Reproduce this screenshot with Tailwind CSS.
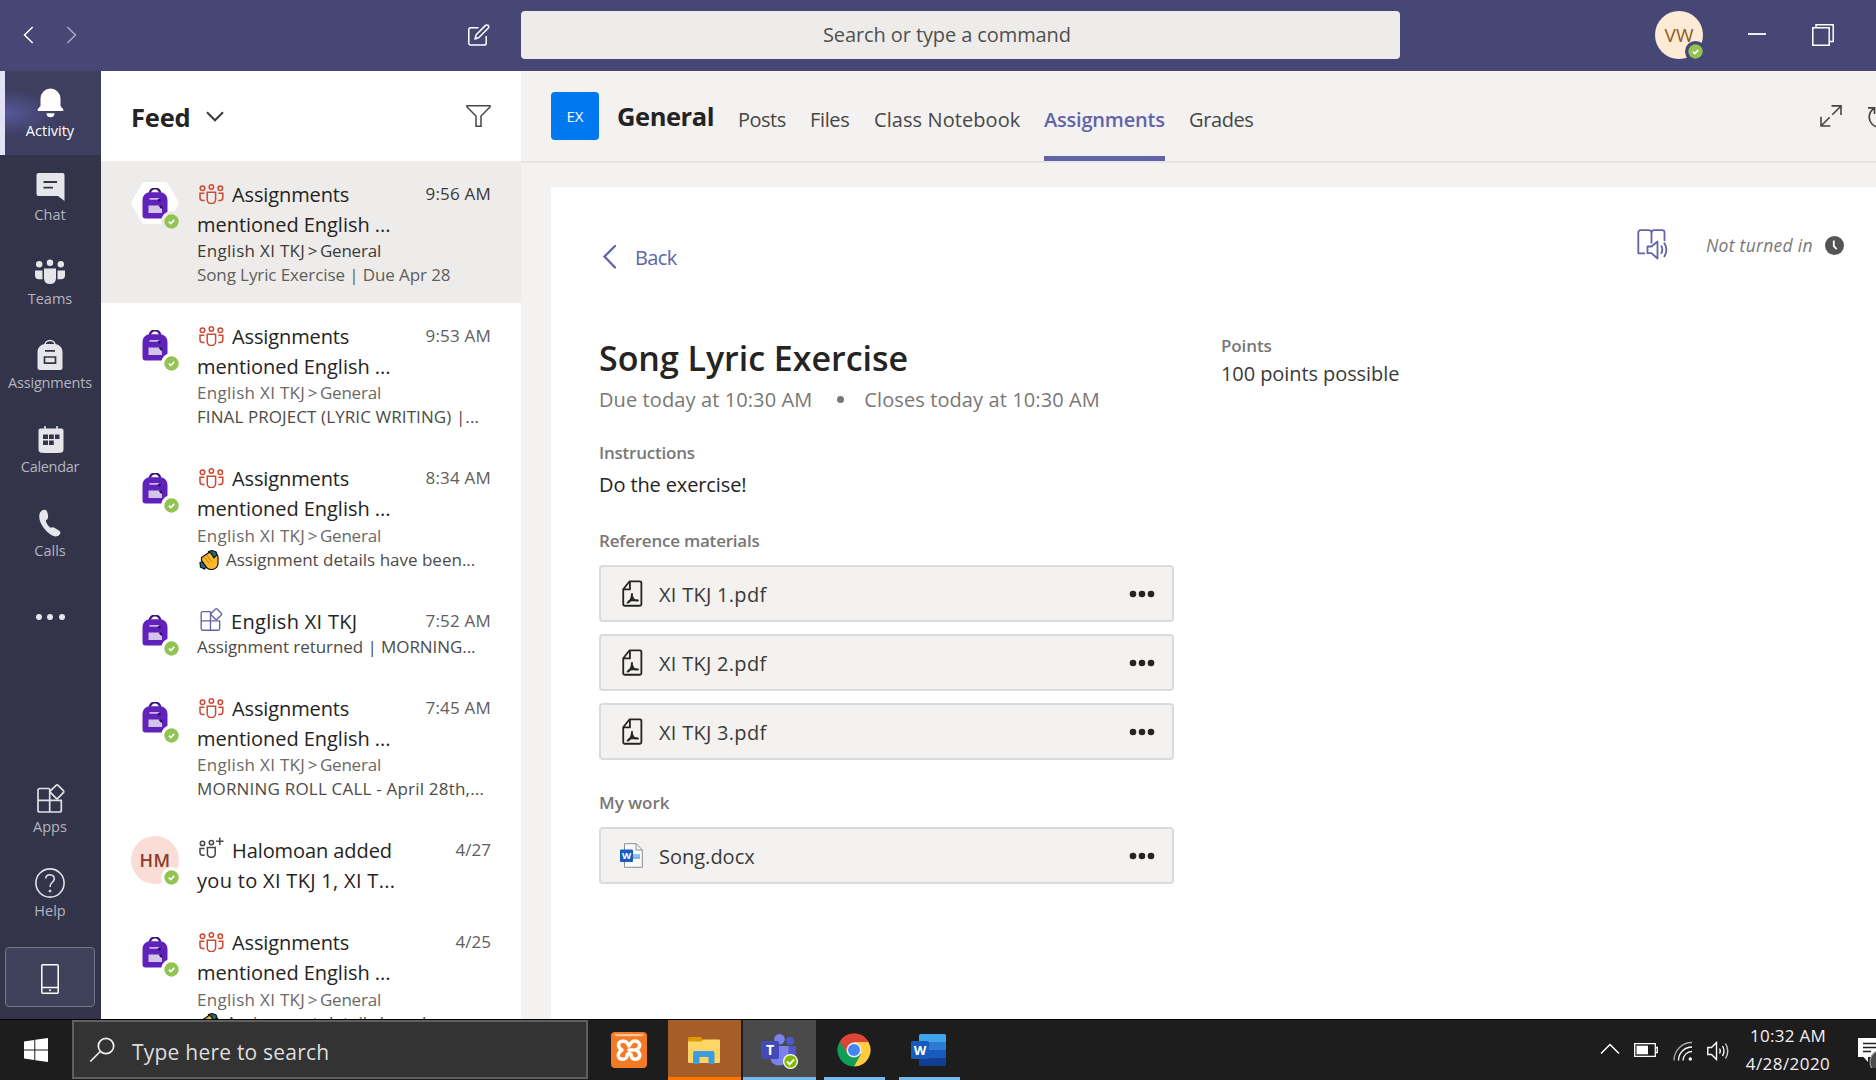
<!DOCTYPE html>
<html lang="en">
<head>
<meta charset="utf-8">
<title>Assignments</title>
<script src="https://cdn.jsdelivr.net/npm/@tailwindcss/browser@4"></script>
</head>
<body class="w-[1876px] h-[1080px] overflow-hidden flex flex-col bg-white font-['Open_Sans',sans-serif] text-[#252423] whitespace-nowrap">

<!-- Shared icons -->
<svg class="hidden">
  <symbol id="team" viewBox="0 0 25 20">
    <g fill="none" stroke="currentColor" stroke-width="1.500">
      <circle cx="3.500" cy="4.200" r="2.300"/><circle cx="12.400" cy="3" r="2.200"/><circle cx="21.300" cy="4.200" r="2.300"/>
      <path d="M8.200 8.200h8.400v7.200a4.200 4.200 0 0 1-8.400 0zM5.400 9.200H1v4.600q0 2.600 2.600 2.600h2M19.400 9.200h4.400v4.600q0 2.600-2.600 2.600h-2"/>
    </g>
  </symbol>
  <symbol id="team-add" viewBox="0 0 25 22">
    <g fill="none" stroke="currentColor" stroke-width="1.500">
      <circle cx="3.500" cy="6.400" r="2.200"/><circle cx="12.400" cy="5.600" r="2.200"/>
      <path d="M8.400 10.600h7.800v6.200a3.500 3.500 0 0 1-3.500 3.500h-.8a3.500 3.500 0 0 1-3.500-3.500zM5.600 11.600H1v4q0 2.600 2.600 2.600h2M20.800.6v7.400M17.100 4.300h7.400"/>
    </g>
  </symbol>
  <symbol id="apps" viewBox="0 0 28 29">
    <path fill="none" stroke="currentColor" stroke-width="1.700" stroke-linejoin="round" d="M12.500 4.500H2.800a1.800 1.800 0 0 0-1.800 1.800V26.200A1.800 1.800 0 0 0 2.800 28H22.500a1.800 1.800 0 0 0 1.800-1.800V16.300H1M12.700 4.500V28M19.100 1.300q1-.8 2 0l5.300 5.400q.8 1 0 2l-5.400 5.400q-1 .8-2 0l-5.400-5.400q-.8-1 0-2z"/>
  </symbol>
  <symbol id="backpack" viewBox="0 0 26 31">
    <path d="M7.500 6a5.500 5.500 0 0 1 11 0" fill="none" stroke="#3b1a80" stroke-width="2.200"/>
    <path d="M.5 12A7.500 7.500 0 0 1 8 4.200h10A7.500 7.500 0 0 1 25.500 12v15.500a3 3 0 0 1-3 3h-19a3 3 0 0 1-3-3z" fill="#6022bb"/>
    <path d="M7.500 10.200h10v1.400h-10z" fill="#e9def8"/><circle cx="17.300" cy="12" r="1.500" fill="#2a0e60"/>
    <path d="M6.500 17.500H18l2 2V25H6.500z" fill="#d3c4ea"/><path d="M16.500 17.500h3.200l1 3.400-2.200-.6z" fill="#2a0e60"/>
  </symbol>
  <symbol id="available" viewBox="0 0 16 16">
    <circle cx="8" cy="8" r="7.700" fill="#92c353"/><path d="M5.200 8.200l2 2L11 6.300" fill="none" stroke="#fff" stroke-width="1.700"/>
  </symbol>
  <symbol id="clap" viewBox="0 0 20 20">
    <path d="M9.500 1.500l3.500-1 4 1.500 1.500 4-2 3-5-3zM1 12.500l3-1 4 5-2.500 2.500L1.500 17z" fill="#1b6f82" stroke="#111" stroke-width="1.200"/>
    <path d="M2.500 7.500L7 4.500l3-2 2 .8 3 4.700L17 5.500q2-.5 2 2v6q-.5 5-5.500 6-4 .4-6-2.200l-5-7z" fill="#fdb92e" stroke="#111" stroke-width="1.200"/>
    <path d="M5 7l5 6M7.500 5l5 6.500" stroke="#c77a10" stroke-width="1"/>
  </symbol>
  <symbol id="pdf" viewBox="0 0 22 28">
    <g fill="none" stroke="#252423" stroke-width="1.900" stroke-linejoin="round">
      <path d="M8 1.200h10.700a1.600 1.600 0 0 1 1.600 1.600v22.400a1.600 1.600 0 0 1-1.600 1.600H2.900a1.600 1.600 0 0 1-1.600-1.600V9.500zM8.300 1.800V9.700H1.800"/>
      <path d="M10.500 14.500q-.3 4.500-1.500 6.200-1.500 2.300-3.200 2.800M10.400 16.500q1 3.500 3 4.600 1.300.5 3.300.2M7 22.300q3.500-1.800 8.500-1.300" stroke-width="2" stroke-linecap="round"/>
    </g>
  </symbol>
  <symbol id="more" viewBox="0 0 26 8"><g fill="#252423"><circle cx="4" cy="4" r="3.300"/><circle cx="13" cy="4" r="3.300"/><circle cx="22" cy="4" r="3.300"/></g></symbol>
</svg>

<!-- Title bar -->
<header class="h-[71px] shrink-0 bg-[#464775] flex items-center text-white pb-px">
  <div class="w-[521px] flex items-center shrink-0">
    <svg class="w-[11px] h-[18px] ml-[23px]" viewBox="0 0 11 18" fill="none" stroke="#fff" stroke-width="1.500"><path d="M9.700 1L1.500 9l8.200 8"/></svg>
    <svg class="w-[11px] h-[18px] ml-[32px]" viewBox="0 0 11 18" fill="none" stroke="#a9a9c4" stroke-width="1.500"><path d="M1.300 1l8.200 8-8.200 8"/></svg>
    <svg class="w-[22px] h-[22px] ml-[391px]" viewBox="0 0 22 22" fill="none" stroke="#fff" stroke-width="1.500" stroke-linejoin="round"><path d="M10.500 3.800H2.600A1.800 1.800 0 0 0 .8 5.600v13.600A1.800 1.800 0 0 0 2.600 21h13.800a1.800 1.800 0 0 0 1.800-1.800V12M7 15l1.200-4.300L17.500 1.400q1.300-1 2.600 0 1.300 1.300 0 2.800L10.900 13.500z"/></svg>
  </div>
  <div class="w-[879px] h-12 rounded bg-[#edecea] text-[#505050] text-[20px] tracking-[-0.100px] pl-[302px] flex items-center">Search or type a command</div>
  <div class="relative w-12 h-12 ml-[255px] rounded-full bg-[#fdebd6] text-[#8f5a1c] text-[19px] flex items-center justify-center">VW
    <div class="absolute left-[30px] top-[30px] w-[21px] h-[21px] rounded-full bg-[#464775] p-[3px]"><svg class="w-[15px] h-[15px]"><use href="#available"/></svg></div>
  </div>
  <div class="w-[18px] h-[2px] bg-white/90 ml-[45px] mt-[-2px]"></div>
  <svg class="w-[22px] h-[22px] ml-[46px]" viewBox="0 0 22 22" fill="none" stroke="#fff" stroke-width="1.500"><path d="M.8 3.800h16.400v17.400H.8zM4 3.500V.8h17.200v16.700H17.500"/></svg>
</header>

<div class="h-[948px] shrink-0 flex overflow-hidden">

<!-- App rail -->
<nav class="w-[101px] shrink-0 bg-[#33344a] flex flex-col text-[14.500px] leading-[20px] text-[#b4b4c0]">
  <div class="h-[84px] border-l-[5px] border-[#e2e2f6] bg-radial-[at_0%_50%] from-[#57589a] to-[#3d3e60] to-40% flex flex-col items-center pr-[6px] text-white">
    <svg class="w-[27px] h-[30px] mt-[17px] shrink-0" viewBox="0 0 27 30" fill="#fff"><path d="M3.500 18V10.500a10 10 0 0 1 20 0V18l2.800 3.200q.7 1.800-1.500 1.800H2.200Q0 23 .7 21.200zM9.500 25.200h8a4 4 0 0 1-8 0z"/></svg>
    <span class="mt-[3px]">Activity</span>
  </div>
  <div class="h-[84px] flex flex-col items-center pr-[1px]">
    <svg class="w-[29px] h-[29px] mt-[17px] shrink-0" viewBox="0 0 29 29"><path d="M2.500 1h24A2 2 0 0 1 28.500 3v26L22 24H2.500a2 2 0 0 1-2-2V3a2 2 0 0 1 2-2z" fill="#e6e6ea"/><path d="M7.500 10h13.500M7.500 15.700h9.500" stroke="#33344a" stroke-width="1.800"/></svg>
    <span class="mt-1">Chat</span>
  </div>
  <div class="h-[84px] flex flex-col items-center pr-[1px]">
    <svg class="w-[30px] h-[26px] mt-[20px] shrink-0" viewBox="0 0 30 26" fill="#e6e6ea"><circle cx="4.200" cy="5.200" r="3.200"/><circle cx="15" cy="3.700" r="3.200"/><circle cx="25.800" cy="5.200" r="3.200"/><path d="M9 9.500h12v10q-.5 5.500-6 5.500t-6-5.500zM0 11.500h7.500v8.700H4Q0 20.200 0 16.200zM22.500 11.500H30v4.700q0 4-4 4h-3.500z"/></svg>
    <span class="mt-1">Teams</span>
  </div>
  <div class="h-[84px] flex flex-col items-center pr-[1px]">
    <svg class="w-[26px] h-[31px] mt-[16px] shrink-0" viewBox="0 0 26 31"><path d="M8 6a5 4.500 0 0 1 10 0" fill="none" stroke="#e6e6ea" stroke-width="1.600"/><path d="M.5 13a8 8 0 0 1 8-8h9a8 8 0 0 1 8 8v15.500a2.500 2.500 0 0 1-2.500 2.500H3a2.500 2.500 0 0 1-2.500-2.500z" fill="#e6e6ea"/><path d="M8 11.800h10M7.500 18h11v6.200h-11z" fill="none" stroke="#33344a" stroke-width="1.700"/></svg>
    <span class="mt-[3px] tracking-[-0.180px]">Assignments</span>
  </div>
  <div class="h-[84px] flex flex-col items-center">
    <svg class="w-[26px] h-[27px] mt-[19px] shrink-0" viewBox="0 0 26 27"><path d="M7 0v5M19 0v5" stroke="#e6e6ea" stroke-width="1.600"/><path d="M2.500 2.500h21a2 2 0 0 1 2 2v19q0 3-3 3.300-9.500.6-19 0-3-.3-3-3.300v-19a2 2 0 0 1 2-2z" fill="#e6e6ea"/><path d="M5 8.500h5v4.500H5zM11 8.500h4.800v4.500H11zM17 8.500h4.500v4.500H17zM5 14.500h5V19H5zM11 14.500h4.800V19H11z" fill="#33344a"/></svg>
    <span class="mt-1 mr-px tracking-[-0.300px]">Calendar</span>
  </div>
  <div class="h-[84px] flex flex-col items-center pr-[1px]">
    <svg class="w-[22px] h-[28px] mt-[18px] shrink-0" viewBox="0 0 22 28"><path d="M1 3.500Q3 .3 6 .8 8 1.300 8.600 4l.6 4.200Q8.800 10.500 6.800 11.300q.5 4.400 4.600 7.500 1.800-.9 3.600-.2l5.300 3.200q1.600 1.200.9 3-1.200 2.600-4.400 2.600-4.600-.6-10-6Q-2 11.500 1 3.500z" fill="#e6e6ea"/></svg>
    <span class="mt-1">Calls</span>
  </div>
  <div class="h-[84px] flex justify-center items-center gap-[5.500px] pr-px">
    <i class="w-[6px] h-[6px] rounded-full bg-[#e6e6ea]"></i><i class="w-[6px] h-[6px] rounded-full bg-[#e6e6ea]"></i><i class="w-[6px] h-[6px] rounded-full bg-[#e6e6ea]"></i>
  </div>
  <div class="mt-[108px] h-[84px] flex flex-col items-center">
    <svg class="w-[28px] h-[29px] mt-[17px] shrink-0 text-[#e0e0e6]"><use href="#apps"/></svg>
    <span class="mt-1 mr-px">Apps</span>
  </div>
  <div class="h-[84px] flex flex-col items-center pr-[1px]">
    <svg class="w-[30px] h-[30px] mt-[17px] shrink-0" viewBox="0 0 30 30" fill="none" stroke="#e0e0e6" stroke-width="1.600"><circle cx="15" cy="15" r="14.100"/><path d="M10.700 10.500Q10.900 6.800 15 6.700q4.200.2 4.300 4 0 2-2.200 3.800-2.300 1.900-2.100 4.500"/><circle cx="15" cy="23" r="1" fill="#e0e0e6" stroke-width="1"/></svg>
    <span class="mt-[3px]">Help</span>
  </div>
  <div class="mt-[12px] ml-[5px] w-[90px] h-[60px] border-[1.500px] border-[#75768a] rounded bg-[#40415a] flex items-center justify-center pt-[4px] pr-[1px]">
    <svg class="w-[18px] h-[30px]" viewBox="0 0 18 30" fill="none" stroke="#fff" stroke-width="1.500"><rect x=".8" y=".8" width="16.400" height="28.400" rx="1"/><path d="M.8 23.500h16.400"/><circle cx="9" cy="26.300" r="1" fill="#fff" stroke="none"/></svg>
  </div>
</nav>

<!-- Feed -->
<aside class="w-[420px] shrink-0 bg-white">
  <div class="h-[90px] flex items-center pl-[30px] pr-[30px]">
    <h1 class="text-[25.500px] font-bold tracking-[-0.200px] mt-[2px]">Feed</h1>
    <svg class="w-[18px] h-[11px] ml-[16px]" viewBox="0 0 18 11" fill="none" stroke="#3b3a39" stroke-width="2"><path d="M1 1.300l8 8 8-8"/></svg>
    <svg class="w-[25px] h-[22px] ml-auto" viewBox="0 0 25 22" fill="none" stroke="#484644" stroke-width="1.500"><path d="M1 .8h23v1.200L15 11v10.200h-5V11L1 2z"/></svg>
  </div>

  <article class="h-[142px] bg-[#edecea] flex pl-[30px] pr-[30px]">
    <div class="relative w-[66px] shrink-0">
      <svg class="absolute left-0 top-[21px] w-[48px] h-[42px]" viewBox="0 0 48 42"><path d="M14 0h20q2 0 3 1.500l10.300 18q.7 1.500 0 3L37 40.500Q36 42 34 42H14q-2 0-3-1.500L.7 22.500q-.7-1.500 0-3L11 1.500Q12 0 14 0z" fill="#fff"/></svg>
      <svg class="absolute left-[11px] top-[27px] w-[26px] h-[31px]"><use href="#backpack"/></svg>
      <div class="absolute left-[30px] top-[50px] p-[3px] rounded-full bg-[#edecea]"><svg class="w-[15px] h-[15px]"><use href="#available"/></svg></div>
    </div>
    <div class="flex-1 pt-[18px]">
      <div class="flex items-center leading-[30px]"><svg class="w-[25px] h-[20px] ml-[2px] mr-[8px] text-[#cc4a31]"><use href="#team"/></svg><span class="pt-px -mb-px text-[20px] tracking-[-0.120px]">Assignments</span><span class="ml-auto text-[17px] tracking-[0.200px] text-[#3b3a39]">9:56 AM</span></div>
      <div class="text-[20px] leading-[31px] tracking-[-0.040px]">mentioned English ...</div>
      <div class="text-[17px] leading-[22px] flex text-[#3b3a39]"><span class="tracking-[0.300px]">English XI TKJ</span><span class="mx-[2.500px]">&gt;</span><span class="tracking-[-0.200px]">General</span></div>
      <div class="text-[17px] leading-[26px] tracking-[-0.100px] text-[#605e5c]">Song Lyric Exercise | Due Apr 28</div>
    </div>
  </article>

  <article class="h-[142px] flex pl-[30px] pr-[30px]">
    <div class="relative w-[66px] shrink-0">
      <svg class="absolute left-[11px] top-[27px] w-[26px] h-[31px]"><use href="#backpack"/></svg>
      <div class="absolute left-[30px] top-[50px] p-[3px] rounded-full bg-white"><svg class="w-[15px] h-[15px]"><use href="#available"/></svg></div>
    </div>
    <div class="flex-1 pt-[18px]">
      <div class="flex items-center leading-[30px]"><svg class="w-[25px] h-[20px] ml-[2px] mr-[8px] text-[#cc4a31]"><use href="#team"/></svg><span class="pt-px -mb-px text-[20px] tracking-[-0.120px]">Assignments</span><span class="ml-auto text-[17px] tracking-[0.200px] text-[#605e5c]">9:53 AM</span></div>
      <div class="text-[20px] leading-[31px] tracking-[-0.040px]">mentioned English ...</div>
      <div class="text-[17px] leading-[22px] flex text-[#6b6967]"><span class="tracking-[0.300px]">English XI TKJ</span><span class="mx-[2.500px]">&gt;</span><span class="tracking-[-0.200px]">General</span></div>
      <div class="text-[17px] leading-[26px] tracking-[0.090px] text-[#4d4b49]">FINAL PROJECT (LYRIC WRITING) |...</div>
    </div>
  </article>

  <article class="h-[143px] flex pl-[30px] pr-[30px]">
    <div class="relative w-[66px] shrink-0">
      <svg class="absolute left-[11px] top-[28px] w-[26px] h-[31px]"><use href="#backpack"/></svg>
      <div class="absolute left-[30px] top-[50px] p-[3px] rounded-full bg-white"><svg class="w-[15px] h-[15px]"><use href="#available"/></svg></div>
    </div>
    <div class="flex-1 pt-[18px]">
      <div class="flex items-center leading-[30px]"><svg class="w-[25px] h-[20px] ml-[2px] mr-[8px] text-[#cc4a31]"><use href="#team"/></svg><span class="pt-px -mb-px text-[20px] tracking-[-0.120px]">Assignments</span><span class="ml-auto text-[17px] tracking-[0.200px] text-[#605e5c]">8:34 AM</span></div>
      <div class="text-[20px] leading-[31px] tracking-[-0.040px]">mentioned English ...</div>
      <div class="text-[17px] leading-[24px] flex text-[#6b6967]"><span class="tracking-[0.300px]">English XI TKJ</span><span class="mx-[2.500px]">&gt;</span><span class="tracking-[-0.200px]">General</span></div>
      <div class="text-[17px] leading-[24px] flex items-center text-[#4d4b49]"><svg class="w-[20px] h-[20px] ml-[2px] mr-[7px]"><use href="#clap"/></svg>Assignment details have been...</div>
    </div>
  </article>

  <article class="h-[87px] flex pl-[30px] pr-[30px]">
    <div class="relative w-[66px] shrink-0">
      <svg class="absolute left-[11px] top-[27px] w-[26px] h-[31px]"><use href="#backpack"/></svg>
      <div class="absolute left-[30px] top-[50px] p-[3px] rounded-full bg-white"><svg class="w-[15px] h-[15px]"><use href="#available"/></svg></div>
    </div>
    <div class="flex-1 pt-[18px]">
      <div class="flex items-center leading-[30px]"><svg class="w-[23px] h-[23px] ml-[3px] mr-[8px] -mt-[3px] text-[#6264a7]"><use href="#apps"/></svg><span class="pt-px -mb-px text-[20px] tracking-[0.300px]">English XI TKJ</span><span class="ml-auto text-[17px] tracking-[0.200px] text-[#605e5c]">7:52 AM</span></div>
      <div class="text-[17px] leading-[22px] tracking-[-0.070px] text-[#4d4b49]">Assignment returned | MORNING...</div>
    </div>
  </article>

  <article class="h-[142px] flex pl-[30px] pr-[30px]">
    <div class="relative w-[66px] shrink-0">
      <svg class="absolute left-[11px] top-[27px] w-[26px] h-[31px]"><use href="#backpack"/></svg>
      <div class="absolute left-[30px] top-[50px] p-[3px] rounded-full bg-white"><svg class="w-[15px] h-[15px]"><use href="#available"/></svg></div>
    </div>
    <div class="flex-1 pt-[18px]">
      <div class="flex items-center leading-[30px]"><svg class="w-[25px] h-[20px] ml-[2px] mr-[8px] text-[#cc4a31]"><use href="#team"/></svg><span class="pt-px -mb-px text-[20px] tracking-[-0.120px]">Assignments</span><span class="ml-auto text-[17px] tracking-[0.200px] text-[#605e5c]">7:45 AM</span></div>
      <div class="text-[20px] leading-[31px] tracking-[-0.040px]">mentioned English ...</div>
      <div class="text-[17px] leading-[22px] flex text-[#6b6967]"><span class="tracking-[0.300px]">English XI TKJ</span><span class="mx-[2.500px]">&gt;</span><span class="tracking-[-0.200px]">General</span></div>
      <div class="text-[17px] leading-[26px] tracking-[0.200px] text-[#4d4b49]">MORNING ROLL CALL - April 28th,...</div>
    </div>
  </article>

  <article class="h-[92px] flex pl-[30px] pr-[30px]">
    <div class="relative w-[66px] shrink-0">
      <div class="absolute left-0 top-[19px] w-12 h-12 rounded-full bg-[#fbddd8] text-[#8e3b2b] text-[18px] font-semibold tracking-[0.400px] flex items-center justify-center">HM</div>
      <div class="absolute left-[30px] top-[50px] p-[3px] rounded-full bg-white"><svg class="w-[15px] h-[15px]"><use href="#available"/></svg></div>
    </div>
    <div class="flex-1 pt-[18px]">
      <div class="flex items-center leading-[30px]"><svg class="w-[25px] h-[22px] ml-[2px] mr-[8px] -mt-[4px] text-[#484644]"><use href="#team-add"/></svg><span class="pt-px -mb-px text-[20px] tracking-[-0.080px]">Halomoan added</span><span class="ml-auto text-[17px] text-[#605e5c]">4/27</span></div>
      <div class="text-[20px] leading-[31px] tracking-[0.310px]">you to XI TKJ 1, XI T...</div>
    </div>
  </article>

  <article class="h-[110px] flex overflow-hidden pl-[30px] pr-[30px]">
    <div class="relative w-[66px] shrink-0">
      <svg class="absolute left-[11px] top-[28px] w-[26px] h-[31px]"><use href="#backpack"/></svg>
      <div class="absolute left-[30px] top-[50px] p-[3px] rounded-full bg-white"><svg class="w-[15px] h-[15px]"><use href="#available"/></svg></div>
    </div>
    <div class="flex-1 pt-[18px]">
      <div class="flex items-center leading-[30px]"><svg class="w-[25px] h-[20px] ml-[2px] mr-[8px] text-[#cc4a31]"><use href="#team"/></svg><span class="pt-px -mb-px text-[20px] tracking-[-0.120px]">Assignments</span><span class="ml-auto text-[17px] text-[#605e5c]">4/25</span></div>
      <div class="text-[20px] leading-[31px] tracking-[-0.040px]">mentioned English ...</div>
      <div class="text-[17px] leading-[23px] flex text-[#6b6967]"><span class="tracking-[0.300px]">English XI TKJ</span><span class="mx-[2.500px]">&gt;</span><span class="tracking-[-0.200px]">General</span></div>
      <div class="text-[17px] leading-[24px] flex items-center text-[#4d4b49]"><svg class="w-[20px] h-[20px] ml-[2px] mr-[7px]"><use href="#clap"/></svg>Assignment details have been...</div>
    </div>
  </article>
</aside>

<!-- Channel content -->
<main class="w-[1355px] shrink-0 bg-[#f3f2f1] flex flex-col overflow-hidden">
  <div class="h-[92px] shrink-0 border-b-2 border-[#e7e6e4] flex pl-[30px] text-[20px] text-[#484644]">
    <div class="w-12 h-12 shrink-0 mt-[21px] rounded-[4px] bg-[#0078f0] text-white text-[15px] flex items-center justify-center">EX</div>
    <h2 class="ml-[18px] w-[97px] shrink-0 leading-[90px] text-[25.500px] font-bold tracking-[-0.450px] text-[#252423]">General</h2>
    <div class="ml-[24px] w-[48px] shrink-0 leading-[97px] tracking-[-0.500px]">Posts</div>
    <div class="ml-[24px] w-[40px] shrink-0 leading-[97px] tracking-[-0.350px]">Files</div>
    <div class="ml-[24px] w-[146px] shrink-0 leading-[97px] tracking-[0.080px]">Class Notebook</div>
    <div class="ml-[24px] w-[121px] shrink-0 leading-[97px] h-[90px] font-semibold tracking-[-0.200px] text-[#6264a7] border-b-[5px] border-[#6264a7]">Assignments</div>
    <div class="ml-[24px] w-[66px] shrink-0 leading-[97px] tracking-[-0.400px]">Grades</div>
    <svg class="w-[22px] h-[22px] mt-[34px] ml-[565px] shrink-0" viewBox="0 0 22 22" fill="none" stroke="#484644" stroke-width="1.600"><path d="M11.500.9H21V10M21 1l-8.700 8.700M1 11.800V21h9.300M1 21l8.700-8.700"/></svg>
    <svg class="w-[24px] h-[24px] mt-[34px] ml-[26px] shrink-0" viewBox="0 0 24 24" fill="none" stroke="#484644" stroke-width="1.700"><path d="M6.500 3.300A10 10 0 1 0 14 2.500M0 2.900h6.500V9"/></svg>
  </div>
  <section class="ml-[30px] mt-[24px] flex-1 bg-white pl-[48px] flex flex-col">
    <div class="h-[116px] flex">
      <div class="w-[1038px] pl-[3px] pt-[56px] h-[84px] flex items-center text-[20px] leading-[28px] tracking-[-0.600px] text-[#6264a7]">
        <svg class="w-[15px] h-[26px] mr-[18px] shrink-0" viewBox="0 0 15 26" fill="none" stroke="#6264a7" stroke-width="2.300" stroke-linecap="round"><path d="M13 2L2.500 12.500 13 23.500"/></svg><span class="pt-px">Back</span>
      </div>
      <svg class="w-[31px] h-[31px] mt-[42px] shrink-0" viewBox="0 0 31 31" fill="none" stroke="#6264a7" stroke-width="1.800" stroke-linejoin="round"><path d="M8 24.300H1.300V3.500A2.300 2.300 0 0 1 3.600 1.200H12Q14.500 1.500 14.500 4V14.500M14.500 4Q14.500 1.500 17 1.200h8.200a2.300 2.300 0 0 1 2.300 2.300V12M10.500 17.500h4l6-5v17l-6-5.300h-4zM24 16.500q2.800 4 0 8.300M27 13.500q4.800 7.300 0 14.500"/></svg>
      <div class="ml-[38px] mt-[44px] text-[17.500px] leading-[28px] italic tracking-[0.280px] text-[#797775] w-[108px]">Not turned in</div>
      <svg class="w-[19px] h-[19px] mt-[49px] ml-[11px] shrink-0" viewBox="0 0 19 19"><circle cx="9.500" cy="9.500" r="9.500" fill="#545454"/><path d="M8.800 4.500v5.600l3 3" fill="none" stroke="#fff" stroke-width="1.800"/></svg>
    </div>
    <div class="flex">
      <div class="w-[622px] shrink-0">
        <h3 class="mt-[32px] leading-[46px] text-[34px] font-semibold tracking-[-0.040px]">Song Lyric Exercise</h3>
        <div class="mt-[5px] leading-[28px] flex items-center text-[20px] tracking-[0.100px] text-[#797775]">Due today at 10:30 AM<i class="w-[7px] h-[7px] rounded-full bg-[#797775] ml-[25px] mr-[20px] -mt-px"></i>Closes today at 10:30 AM</div>
      </div>
      <div class="pt-[31px]">
        <div class="text-[17px] leading-[24px] font-semibold tracking-[-0.120px] text-[#797775]">Points</div>
        <div class="mt-[2px] text-[20px] leading-[28px] tracking-[-0.080px] text-[#3b3a39]">100 points possible</div>
      </div>
    </div>
    <div class="mt-[27px] text-[17px] leading-[24px] font-semibold tracking-[-0.220px] text-[#797775]">Instructions</div>
    <div class="mt-[6px] text-[20px] leading-[28px] tracking-[-0.120px]">Do the exercise!</div>
    <div class="mt-[30px] text-[17px] leading-[24px] font-semibold tracking-[-0.220px] text-[#797775]">Reference materials</div>
    <div class="mt-[12px] w-[575px] flex flex-col gap-3 text-[20px] leading-[28px] tracking-[0.280px] text-[#3b3a39]">
      <div class="h-[57px] flex items-center rounded border-2 border-[#dadbe0] bg-[#f3f2f1] pl-[21px] pr-[17px]"><svg class="w-[21px] h-[27px] mr-[16px]"><use href="#pdf"/></svg><span class="pt-[2px]">XI TKJ 1.pdf</span><svg class="w-[26px] h-[8px] ml-auto mt-px"><use href="#more"/></svg></div>
      <div class="h-[57px] flex items-center rounded border-2 border-[#dadbe0] bg-[#f3f2f1] pl-[21px] pr-[17px]"><svg class="w-[21px] h-[27px] mr-[16px]"><use href="#pdf"/></svg><span class="pt-[2px]">XI TKJ 2.pdf</span><svg class="w-[26px] h-[8px] ml-auto mt-px"><use href="#more"/></svg></div>
      <div class="h-[57px] flex items-center rounded border-2 border-[#dadbe0] bg-[#f3f2f1] pl-[21px] pr-[17px]"><svg class="w-[21px] h-[27px] mr-[16px]"><use href="#pdf"/></svg><span class="pt-[2px]">XI TKJ 3.pdf</span><svg class="w-[26px] h-[8px] ml-auto mt-px"><use href="#more"/></svg></div>
    </div>
    <div class="mt-[31px] text-[17px] leading-[24px] font-semibold text-[#797775]">My work</div>
    <div class="mt-[12px] w-[575px] h-[57px] shrink-0 flex items-center rounded border-2 border-[#dadbe0] bg-[#f3f2f1] pl-[19px] pr-[17px] text-[20px] text-[#3b3a39]">
      <svg class="w-[23px] h-[25px] mr-[16px]" viewBox="0 0 23 25"><path d="M4.500.7h11.800l6 6.300v17.300H4.500z" fill="#fafafa" stroke="#8e8e93" stroke-width="1"/><path d="M16 .7V7h6.300" fill="none" stroke="#8e8e93"/><path d="M13 11h7v3.500h-7z" fill="#8fc4f0"/><path d="M13 14.500h7v1h-7z" fill="#2b7cd3"/><rect y="6.500" width="13" height="12.500" rx="1" fill="#185abd"/><text x="6.500" y="16.300" text-anchor="middle" font-family="Open Sans" font-weight="700" font-size="9.500" fill="#fff">W</text></svg><span class="pt-[2px]">Song.docx</span><svg class="w-[26px] h-[8px] ml-auto mt-px"><use href="#more"/></svg>
    </div>
  </section>
</main>
</div>

<!-- Taskbar -->
<footer class="h-[61px] shrink-0 border-t border-black bg-[#1d1d1d] flex text-[#f2f2f2] overflow-hidden">
  <div class="w-[72px] shrink-0 flex items-center pl-[24px]">
    <svg class="w-[24px] h-[24px]" viewBox="0 0 24 24" fill="#fff"><path d="M0 3.400L10.300 2v9.500H0zM11.300 1.800L24 0v11.500H11.300zM0 12.500h10.300V22L0 20.600zM11.300 12.500H24V24l-12.700-1.800z"/></svg>
  </div>
  <div class="w-[516px] h-[59px] shrink-0 border-2 border-[#606060] bg-[#333] flex items-center pl-[15px] text-[21px] tracking-[0.220px] text-[#dedede]">
    <svg class="w-[26px] h-[26px] mr-[17px]" viewBox="0 0 26 26" fill="none" stroke="#f0f0f0" stroke-width="1.700"><circle cx="17" cy="9" r="7.700"/><path d="M11.300 14.500L1.300 24.500"/></svg><span class="mt-[6px]">Type here to search</span>
  </div>
  <div class="ml-[23px] mt-[12px] w-[36px] h-[36px] shrink-0">
    <svg class="w-full h-full" viewBox="0 0 36 36"><rect width="36" height="36" rx="4" fill="#f47a25"/><path d="M3.500 2h29q0 2.300-3 2.300h-23q-3 0-3-2.300z" fill="#fbc49b"/><path d="M18 14Q16 9 12 9 7.300 9.500 7.500 13.500 8 16.500 11 18 7 20.500 7.300 24 8 27.500 12 27.300 16 27 16.300 22.500 18 20.500 20 22.500 20.500 27.300 24.500 27.300 29 27 28.700 22.500 28 19.500 25 18 29 16 28.700 12.500 27.500 9 24 9 20.500 9 18 14M18 18h5" fill="none" stroke="#fff" stroke-width="3.500" stroke-linejoin="round" stroke-linecap="round"/></svg>
  </div>
  <div class="ml-[21px] w-[73px] h-[60px] shrink-0 bg-[#a65e29] border-b-[3px] border-[#ff7300] pl-[20px] pt-[17px]">
    <svg class="w-[32px] h-[27px]" viewBox="0 0 32 27"><path d="M0 1.500Q0 0 1.500 0h11L15 2.500v4H0z" fill="#dd9a06"/><path d="M0 4.500h13l2.500-2H31q1 0 1 1V25q0 1-1 1H1q-1 0-1-1z" fill="#ffd666"/><path d="M5 16q0-2 2-2h17.500q2 0 2 2v11h-6v-7H11.500v7H5z" fill="#3d9be0"/></svg>
  </div>
  <div class="ml-[2px] w-[73px] h-[60px] shrink-0 bg-[#4a4a4a] border-b-[3px] border-[#76b9ed] pl-[18px] pt-[14px]">
    <svg class="w-[38px] h-[36px]" viewBox="0 0 38 36"><circle cx="29" cy="7" r="4" fill="#5059c9"/><circle cx="18.500" cy="5.300" r="5.300" fill="#7b83eb"/><path d="M26 12h9v10q-1 6-9 6z" fill="#5059c9"/><path d="M9 12h18.500v11q-1 8.500-9.200 8.500Q10 31.500 9 23z" fill="#7b83eb"/><rect y="7" width="18" height="18" rx="1.500" fill="#4349b5"/><text x="9" y="21" text-anchor="middle" font-family="Open Sans" font-weight="700" font-size="14" fill="#fff">T</text><circle cx="29.500" cy="27.500" r="7.500" fill="#fff"/><circle cx="29.500" cy="27.500" r="6.200" fill="#7fba00"/><path d="M26 27.500l2.600 2.700 4.600-4.800" fill="none" stroke="#fff" stroke-width="2"/></svg>
  </div>
  <div class="ml-[8px] w-[61px] h-[60px] shrink-0 border-b-[3px] border-[#76b9ed] pl-[13px] pt-[13px]">
    <svg class="w-[34px] h-[34px]" viewBox="0 0 34 34"><path d="M17 17L2.700 8.700A16.500 16.500 0 0 1 31.300 8.700z" fill="#db4437"/><path d="M17 17L31.300 8.700A16.500 16.500 0 0 1 17 33.500L15 30z" fill="#ffcd40"/><path d="M17 17l7 4-7 12.500A16.500 16.500 0 0 1 2.700 8.700z" fill="#0f9d58"/><path d="M17 9h14.500l-7.500 12z" fill="#ffcd40"/><path d="M17 9h14.500A16.500 16.500 0 0 0 3 8.300L10 20z" fill="#db4437"/><circle cx="17" cy="17" r="7.500" fill="#f1f1f1"/><circle cx="17" cy="17" r="6" fill="#4285f4"/></svg>
  </div>
  <div class="ml-[14px] w-[61px] h-[60px] shrink-0 border-b-[3px] border-[#76b9ed] pl-[12px] pt-[14px]">
    <svg class="w-[36px] h-[32px]" viewBox="0 0 36 32"><path d="M8 1.500Q8 0 9.500 0h24Q35 0 35 1.500V8H8z" fill="#41a5ee"/><path d="M8 8h27v8H8z" fill="#2b7cd3"/><path d="M8 16h27v8H8z" fill="#185abd"/><path d="M8 24h27v6.500q0 1.500-1.500 1.500h-24Q8 32 8 30.500z" fill="#103f91"/><rect y="7" width="18" height="18" rx="1.500" fill="#185abd"/><text x="9" y="20.800" text-anchor="middle" font-family="Open Sans" font-weight="700" font-size="13" fill="#fff">W</text></svg>
  </div>
  <svg class="w-[20px] h-[12px] mt-[23px] ml-[640px] shrink-0" viewBox="0 0 20 12" fill="none" stroke="#fff" stroke-width="1.500"><path d="M1 10.500L10 1.500l9 9"/></svg>
  <svg class="w-[24px] h-[14px] mt-[23px] ml-[14px] shrink-0" viewBox="0 0 24 14"><path d="M.7.700h20.600v12.600H.7zM22 4.500h1.300v5H22" fill="none" stroke="#fff" stroke-width="1.300"/><path d="M2.500 2.700h11.500v8.600H2.500z" fill="#fff"/></svg>
  <svg class="w-[20px] h-[20px] mt-[21px] ml-[15px] shrink-0" viewBox="0 0 20 20" fill="none" stroke="#fff" stroke-width="1.300"><path d="M1 19.500A18 18 0 0 1 19 1.500" stroke="#aaa"/><path d="M5.500 19.500A13.500 13.500 0 0 1 19 6M10 19.500a9 9 0 0 1 9-9"/><circle cx="17.300" cy="18" r="1.700" fill="#fff" stroke="none"/></svg>
  <svg class="w-[23px] h-[20px] mt-[21px] ml-[14px] shrink-0" viewBox="0 0 23 20" fill="none" stroke="#fff" stroke-width="1.400"><path d="M.8 6.500h3.700l5-5v17l-5-5H.8zM12.500 7.500q1.500 2.500 0 5M15.500 5q3 5 0 10"/><path d="M18.500 2.500q4.500 7.500 0 15" stroke="#ccc"/></svg>
  <div class="w-[90px] ml-[13px] shrink-0 text-center text-[17px] leading-[28px] pt-[2px]"><div class="tracking-[0.300px]">10:32 AM</div><div class="tracking-[0.450px]">4/28/2020</div></div>
  <svg class="w-[24px] h-[30px] mt-[18px] ml-[25px] shrink-0" viewBox="0 0 24 30"><path d="M0 0h24v19H10v5l-4.500-5H0z" fill="#fff"/><path d="M5 5.500h19M5 9.500h19M5 13.500h8" stroke="#1d1d1d" stroke-width="1.300"/><circle cx="24" cy="24" r="12" fill="#4c4c4c" stroke="#9a9a9a" stroke-width="1.200"/></svg>
</footer>
</body>
</html>
